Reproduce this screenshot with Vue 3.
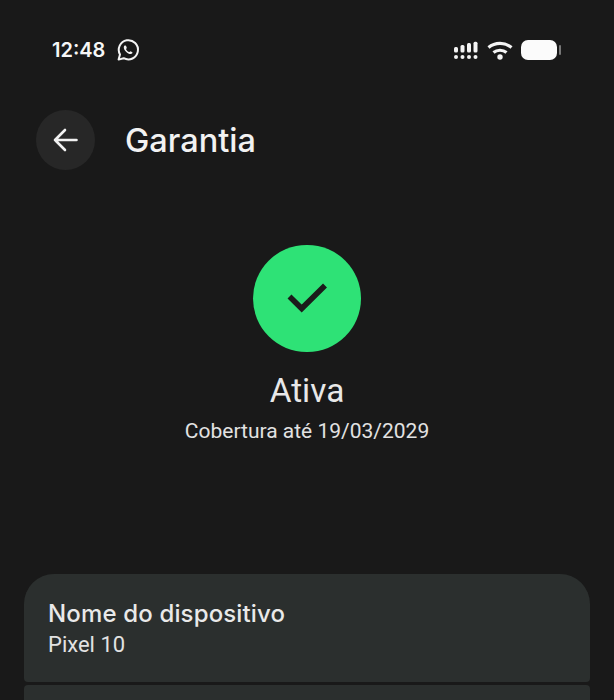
<script setup>
const rows = [{ label: 'Nome do dispositivo', value: 'Pixel 10' }]
</script>

<template>
  <div class="page">
    <header class="status">
      <div class="status-left">
        <span class="time">12:48</span>
        <svg class="wa" width="24" height="24" viewBox="0 0 24 24" fill="none">
          <path d="M2.6 21.6l1.4-5.1a9.6 9.6 0 1 1 3.7 3.7z" stroke="#f4f4f4" stroke-width="2" stroke-linejoin="round"/>
          <path d="M9 7.6c-.5 0-1.2.6-1.2 1.9 0 2.6 3.8 6.6 6.9 6.6 1.2 0 1.8-.9 1.8-1.5 0-.4-1.8-1.4-2.2-1.4-.4 0-.7.9-1.1.9-.9 0-3.1-2.1-3.1-2.9 0-.4.7-.7.7-1.1 0-.5-.8-2.5-1.3-2.5z" fill="#f4f4f4"/>
        </svg>
      </div>
      <div class="status-right">
        <svg width="26" height="20" viewBox="0 0 26 20" fill="#f4f4f4">
          <rect x="1" y="7" width="4" height="5.5" rx="1.5"/><circle cx="3" cy="17" r="2"/>
          <rect x="7.5" y="5" width="4" height="7.5" rx="1.5"/><circle cx="9.5" cy="17" r="2"/>
          <rect x="14" y="3" width="4" height="9.5" rx="1.5"/><circle cx="16" cy="17" r="2"/>
          <rect x="20.5" y="1.7" width="4" height="10.8" rx="1.5"/><circle cx="22.5" cy="17" r="2"/>
        </svg>
        <svg width="26" height="20" viewBox="0 0 26 20" fill="none" stroke="#f4f4f4" stroke-width="3.2">
          <path d="M1.5 7.5C8 2 18 2 24.5 7.5"/>
          <path d="M6.5 12.5c3.6-3 9.4-3 13 0"/>
          <circle cx="13" cy="17" r="2.7" fill="#f4f4f4" stroke="none"/>
        </svg>
        <div class="battery">
          <span class="cell"></span>
          <span class="cap"></span>
        </div>
      </div>
    </header>

    <div class="appbar">
      <button class="back" aria-label="Voltar">
        <svg width="28" height="28" viewBox="0 0 28 28" fill="none" stroke="#f1f1f1" stroke-width="2.6" stroke-linecap="round" stroke-linejoin="round">
          <path d="M24.5 14H3M13 4 3 14l10 10"/>
        </svg>
      </button>
      <h1 class="title">Garantia</h1>
    </div>

    <section class="hero">
      <div class="badge">
        <svg width="42" height="34" viewBox="0 0 42 34" fill="none" stroke="#1b1c1b" stroke-width="5.6">
          <path d="M3.5 15.5 15.7 27.5 39 4.5"/>
        </svg>
      </div>
      <div class="state">Ativa</div>
      <div class="until">Cobertura até 19/03/2029</div>
    </section>

    <section class="cards">
      <div v-for="r in rows" :key="r.label" class="card first">
        <div class="label">{{ r.label }}</div>
        <div class="value">{{ r.value }}</div>
      </div>
      <div class="card"></div>
    </section>
  </div>
</template>

<style>
html, body { margin: 0; background: #191919; }
</style>

<style scoped>
.page {
  width: 614px;
  height: 700px;
  overflow: hidden;
  background: #191919;
  font-family: Roboto, "Open Sans", sans-serif;
  color: #f1f1f1;
}
.status {
  height: 100px;
  box-sizing: border-box;
  padding: 37px 53px 0 52px;
  display: flex;
  justify-content: space-between;
  align-items: flex-start;
}
.status-left { display: flex; align-items: center; gap: 11px; height: 26px; }
.time { font-family: Inter, sans-serif; font-size: 20px; font-weight: 600; color: #f6f6f6; line-height: 26px; }
.status-right { display: flex; align-items: center; gap: 8px; height: 26px; }
.battery { display: flex; align-items: center; gap: 2px; }
.cell { width: 36px; height: 20px; background: #fbfbfb; border-radius: 7px; }
.cap { width: 2px; height: 10px; background: #777; border-radius: 1px; }
.appbar {
  margin-top: 10px;
  padding-left: 36px;
  height: 60px;
  display: flex;
  align-items: center;
  gap: 30px;
}
.back {
  width: 59px;
  height: 60px;
  padding: 0;
  border: 0;
  border-radius: 50%;
  background: #272727;
  display: flex;
  align-items: center;
  justify-content: center;
}
.title {
  margin: 0;
  padding-top: 2px;
  font-family: Inter, sans-serif;
  font-size: 32.5px;
  line-height: 40px;
  font-weight: 500;
  color: #f2f2f2;
}
.hero {
  margin-top: 74.5px;
  display: flex;
  flex-direction: column;
  align-items: center;
}
.badge {
  width: 107.5px;
  height: 107.5px;
  border-radius: 50%;
  background: #2ee276;
  display: flex;
  align-items: center;
  justify-content: center;
}
.state {
  margin-top: 19px;
  font-size: 33.4px;
  line-height: 40px;
  color: #e8e8e8;
}
.until {
  margin-top: 7px;
  font-size: 21px;
  line-height: 26px;
  color: #e2e2e2;
}
.cards {
  margin-top: 130px;
  padding: 0 24px;
  display: flex;
  flex-direction: column;
  gap: 3px;
}
.card {
  height: 108px;
  box-sizing: border-box;
  padding: 25px 24px;
  background: #2b2f2e;
  border-radius: 4px;
}
.first { border-radius: 30px 30px 4px 4px; }
.label { font-family: Inter, sans-serif; font-size: 24px; letter-spacing: 0.15px; line-height: 30px; font-weight: 450; color: #e9e9e9; }
.value { margin-top: 1px; font-size: 22px; line-height: 29px; color: #e2e2e2; }
</style>
